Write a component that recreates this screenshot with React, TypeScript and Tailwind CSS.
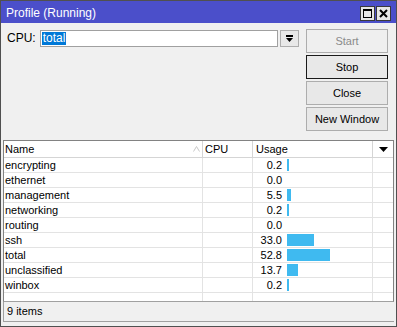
import React from "react";

type Row = { name: string; usage: number };

const rows: Row[] = [
  { name: "encrypting", usage: 0.2 },
  { name: "ethernet", usage: 0.0 },
  { name: "management", usage: 5.5 },
  { name: "networking", usage: 0.2 },
  { name: "routing", usage: 0.0 },
  { name: "ssh", usage: 33.0 },
  { name: "total", usage: 52.8 },
  { name: "unclassified", usage: 13.7 },
  { name: "winbox", usage: 0.2 },
];

function Button({ label, disabled, main }: { label: string; disabled?: boolean; main?: boolean }) {
  return (
    <button
      className={
        main
          ? "h-[24px] w-[82px] border border-[#1a1a1a] bg-[#e8e8e8] text-[11px] text-black"
          : disabled
          ? "h-[24px] w-[82px] border border-[#adadad] bg-[#efefef] text-[11px] text-[#8a8a8a]"
          : "h-[24px] w-[82px] border border-[#adadad] bg-[#e8e8e8] text-[11px] text-black"
      }
    >
      {label}
    </button>
  );
}

export default function App() {
  return (
    <div
      className="flex h-[327px] w-[397px] flex-col border border-[#505050] bg-[#f0f0f0] text-black"
      style={{ fontFamily: '"Liberation Sans", Arial, sans-serif' }}
    >
      {/* Title bar */}
      <div className="flex h-[22px] items-center bg-[#4b4fca] pl-[5px] pr-[5px]">
        <span className="mt-[2px] flex-1 text-[12px] text-white">Profile (Running)</span>
        <div className="mt-[3px] flex gap-[1px]">
          <div className="flex h-[15px] w-[15px] items-center justify-center border border-[#3a3a3a] bg-[#e6e6e6]">
            <div className="h-[9px] w-[9px] border border-black border-t-2" />
          </div>
          <div className="flex h-[15px] w-[15px] items-center justify-center border border-[#3a3a3a] bg-[#e6e6e6]">
            <svg width="9" height="9" viewBox="0 0 9 9">
              <path d="M1 1 L8 8 M8 1 L1 8" stroke="#000" strokeWidth="2" />
            </svg>
          </div>
        </div>
      </div>

      {/* Top controls */}
      <div className="flex pl-[6px] pr-[8px] pt-[6px]">
        <div className="flex flex-1 items-start pt-[1px]">
          <span className="mr-[4px] mt-[1px] text-[12px] leading-[15px]">CPU:</span>
          <div className="flex h-[17px] w-[238px] items-center border border-[#a0a0a0] bg-white px-[1px]">
            <span className="bg-[#0078d7] px-[1px] text-[12px] leading-[13px] text-white">total</span>
          </div>
          <div className="ml-[2px] flex h-[17px] w-[19px] items-center justify-center border border-[#adadad] bg-[#e8e8e8]">
            <svg width="9" height="9" viewBox="0 0 9 9">
              <rect x="1" y="1" width="7" height="2" fill="#000" />
              <path d="M1 4 L8 4 L4.5 8 Z" fill="#000" />
            </svg>
          </div>
        </div>
        <div className="flex flex-col gap-[2px]">
          <Button label="Start" disabled />
          <Button label="Stop" main />
          <Button label="Close" />
          <Button label="New Window" />
        </div>
      </div>

      {/* Table */}
      <div className="ml-[2px] mr-[2px] mt-[9px] flex h-[162px] flex-col border border-[#828282] border-b-[#a0a0a0] bg-white text-[11px]">
        <div className="flex h-[17px] border-b border-[#d5d5d5]">
          <div className="flex w-[199px] items-center justify-between border-r border-[#d5d5d5] pl-[1px] pr-[2px]">
            <span>Name</span>
            <svg width="7" height="6" viewBox="0 0 7 6">
              <path d="M0.5 5.5 L3.5 0.5 L6.5 5.5" fill="none" stroke="#c8c8c8" strokeWidth="1" />
            </svg>
          </div>
          <div className="flex w-[50px] items-center border-r border-[#d5d5d5] pl-[2px]">CPU</div>
          <div className="flex w-[120px] items-center border-r border-[#d5d5d5] pl-[3px]">Usage</div>
          <div className="flex flex-1 items-center justify-center">
            <svg width="9" height="5" viewBox="0 0 9 5">
              <path d="M0 0 L9 0 L4.5 5 Z" fill="#000" />
            </svg>
          </div>
        </div>
        {rows.map((r) => (
          <div key={r.name} className="flex h-[15px] border-b border-[#e3e3e3]">
            <div className="flex w-[199px] items-center border-r border-[#e3e3e3] pl-[1px]">{r.name}</div>
            <div className="w-[50px] border-r border-[#e3e3e3]" />
            <div className="flex w-[120px] items-center border-r border-[#e3e3e3]">
              <span className="w-[29px] text-right">{r.usage.toFixed(1)}</span>
              {r.usage > 0 && (
                <div
                  className="ml-[5px] h-[12px] bg-[#3fbaf0]"
                  style={{ width: Math.max(2, Math.round(r.usage * 0.815)) }}
                />
              )}
            </div>
            <div className="flex-1" />
          </div>
        ))}
        <div className="flex flex-1">
          <div className="w-[199px] border-r border-[#e3e3e3]" />
          <div className="w-[50px] border-r border-[#e3e3e3]" />
          <div className="w-[120px] border-r border-[#e3e3e3]" />
        </div>
      </div>

      {/* Status bar */}
      <div className="ml-[2px] mr-[2px] flex h-[20px] items-center border-b border-l border-[#a0a0a0] pl-[3px] text-[11px]">
        9 items
      </div>
    </div>
  );
}
